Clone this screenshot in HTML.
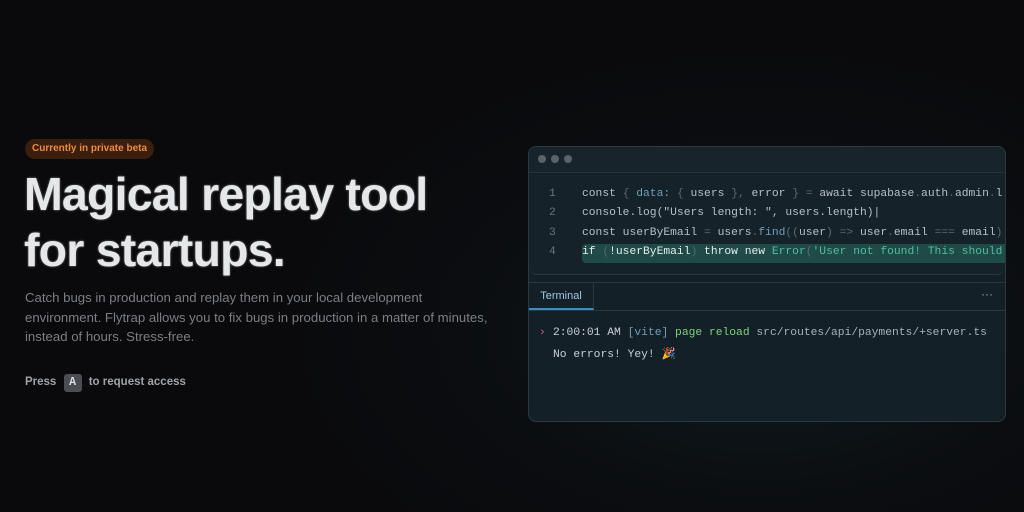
<html><head><style>
body{margin:0;width:1024px;height:512px;overflow:hidden;background:radial-gradient(ellipse 500px 300px at 760px 330px,#0f1b1f 0%,#0b0d10 60%,#0a0a0c 100%);font-family:"Liberation Sans",sans-serif;position:relative}
.badge{position:absolute;left:25px;top:139px;height:20px;padding:0 7px;border-radius:10px;background:#3a1f0f;color:#f08a3c;font-size:10px;font-weight:bold;line-height:20px}
h1{position:absolute;left:24px;top:166px;margin:0;font-size:46.5px;line-height:56px;font-weight:bold;color:#e6e7ea;letter-spacing:-0.8px;text-shadow:0 0 2px #888}
p{position:absolute;left:25px;top:288px;margin:0;width:470px;font-size:13.2px;line-height:19.5px;color:#7b7e85}
.press{position:absolute;left:25px;top:373px;font-size:11.5px;font-weight:bold;color:#a0a3a9;line-height:18px}
.key{display:inline-block;width:18px;height:18px;background:#4a4d53;border-radius:3px;color:#ddd;text-align:center;margin:0 4px;font-family:"Liberation Mono",monospace}
.win{position:absolute;left:528px;top:146px;width:476px;height:274px;border:1px solid #2b3a40;border-radius:8px;background:#142028;overflow:hidden}
.tb{height:25px;border-bottom:1px solid #27353b;background:#18242b}
.dot{position:absolute;top:8px;width:8px;height:8px;border-radius:50%;background:#5b6368}
.code{position:absolute;top:27px;left:0;right:0;height:100px;background:#15222a;border-bottom:1px solid #2a383e;border-radius:0 0 8px 8px;font-family:"Liberation Mono",monospace;font-size:11.3px;color:#b8bfc4;white-space:pre}
.ln{position:absolute;left:20px;color:#6a7479}
.c{position:absolute;left:53px}
.d{color:#5a6a70}.b{color:#6f9fb8}.g{color:#4fbf9a}
.tab{position:absolute;top:136px;left:0;width:64px;height:25px;border-bottom:2px solid #3a8fc0;color:#9fc7de;font-size:11px;line-height:26px;text-align:center;border-right:1px solid #2a383e}
.tabbar{position:absolute;top:135px;left:0;right:0;height:27px;border-bottom:1px solid #2a383e;border-top:1px solid #2a383e}
.term{position:absolute;left:0;top:175px;font-family:"Liberation Mono",monospace;font-size:11.3px;color:#c9cfd2;white-space:pre;line-height:22px}
</style></head><body>
<div class="badge">Currently in private beta</div>
<h1>Magical replay tool<br>for startups.</h1>
<p>Catch bugs in production and replay them in your local development environment. Flytrap allows you to fix bugs in production in a matter of minutes, instead of hours. Stress-free.</p>
<div class="press">Press <span class="key">A</span> to request access</div>
<div class="win">
<div class="tb"></div>
<div class="dot" style="left:9px"></div><div class="dot" style="left:22px"></div><div class="dot" style="left:35px"></div>
<div class="code">
<div class="ln" style="top:14px">1</div><div class="c" style="top:14px">const <span class="d">{</span> <span class="b">data:</span> <span class="d">{</span> users <span class="d">},</span> error <span class="d">} =</span> await supabase<span class="d">.</span>auth<span class="d">.</span>admin<span class="d">.</span>l</div>
<div class="ln" style="top:33px">2</div><div class="c" style="top:33px">console.log("Users length: ", users.length)|</div>
<div class="ln" style="top:53px">3</div><div class="c" style="top:53px">const userByEmail <span class="d">=</span> users<span class="d">.</span><span class="b">find</span><span class="d">((</span>user<span class="d">) =&gt;</span> user<span class="d">.</span>email <span class="d">===</span> email<span class="d">)</span></div>
<div style="position:absolute;left:53px;right:0;top:70px;height:19px;background:#1e4a48;border-radius:4px 0 0 4px"></div>
<div class="ln" style="top:72px">4</div><div class="c" style="top:72px;color:#e6ecec">if <span class="d">(</span>!userByEmail<span class="d">)</span> throw new <span class="g">Error</span><span class="d">(</span><span class="g">'User not found! This should</span></div>
</div>
<div class="tabbar"></div>
<div class="tab">Terminal</div>
<div style="position:absolute;right:12px;top:140px;color:#aaa;font-size:12px">···</div>
<div class="term"><span style="position:absolute;left:10px;color:#e05a8a">›</span><span style="margin-left:24px">2:00:01 AM <span class="b">[vite]</span> <span style="color:#7fd17a">page reload</span> <span style="color:#a8b0b4">src/routes/api/payments/+server.ts</span></span>
<span style="margin-left:24px">No errors! Yey! 🎉</span></div>
</div>
</body></html>
